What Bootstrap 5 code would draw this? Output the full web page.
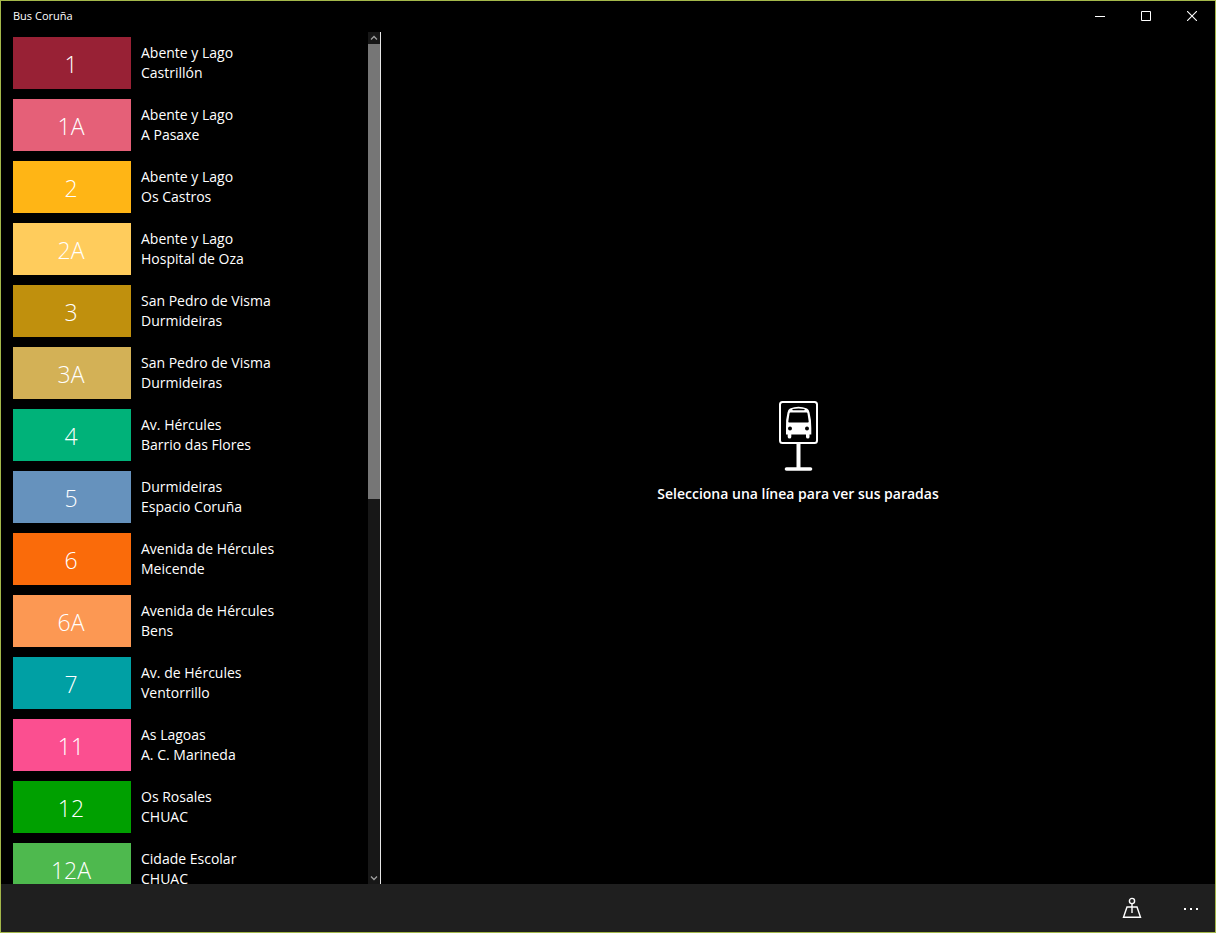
<!DOCTYPE html>
<html lang="es">
<head>
<meta charset="utf-8">
<meta name="viewport" content="width=device-width, initial-scale=1">
<title>Bus Coruña</title>
<link href="https://cdn.jsdelivr.net/npm/bootstrap@5.3.0/dist/css/bootstrap.min.css" rel="stylesheet">
<style>
  body { background: #000; color: #fff; font-family: "Open Sans", "Noto Sans", sans-serif; font-size: 14px; line-height: 20px; }
  .app-window { border: 1px solid #a4b84a; }
  .titlebar { height: 31px; padding: 0 0 2px 12px; font-size: 11px; }
  .caption-btn { width: 46px; color: #fff; }
  .plain-btn { background: none; border: 0; padding: 0; display: flex; align-items: center; justify-content: center; }
  .sidebar { width: 380px; border-right: 1px solid #e6e6e6; }
  .lines { padding: 5px 12px; gap: 10px; }
  .line-link { color: #fff; gap: 10px; }
  .line-no { width: 118px; height: 52px; padding: 1px 2px 0 0; font-size: 23px; font-weight: 350; line-height: 30px; }
  .scroller { width: 12px; background: #171717; }
  .scroller button { height: 12px; color: #a0a0a0; }
  .thumb { background: #767676; }
  .empty-state { gap: 12px; padding-bottom: 12px; font-weight: 600; }
  .commandbar { height: 48px; background: #1f1f1f; }
  .commandbar button { color: #fff; }
  .btn-map { width: 70px; }
  .btn-more { width: 48px; }
</style>
</head>
<body>
<div class="app-window vh-100 d-flex flex-column overflow-hidden">
  <header class="titlebar d-flex flex-shrink-0 align-items-center justify-content-between">
    <span>Bus Coruña</span>
    <div class="d-flex h-100">
      <button class="plain-btn caption-btn" type="button" aria-label="Minimizar"><svg width="10" height="10" viewBox="0 0 10 10" shape-rendering="crispEdges"><path d="M0 5h10v1H0z" fill="currentColor"/></svg></button>
      <button class="plain-btn caption-btn" type="button" aria-label="Maximizar"><svg width="10" height="10" viewBox="0 0 10 10"><path d="M.5.5h9v9h-9z" fill="none" stroke="currentColor"/></svg></button>
      <button class="plain-btn caption-btn" type="button" aria-label="Cerrar"><svg width="10" height="10" viewBox="0 0 10 10"><path d="M0 0l10 10M10 0L0 10" fill="none" stroke="currentColor" stroke-width="1.1"/></svg></button>
    </div>
  </header>

  <div class="d-flex flex-grow-1 overflow-hidden">
    <aside class="sidebar d-flex flex-shrink-0">
      <nav class="flex-grow-1 overflow-hidden" aria-label="Líneas">
        <ul class="lines list-unstyled d-flex flex-column mb-0" id="lines"></ul>
      </nav>
      <div class="scroller d-flex flex-column">
        <button class="plain-btn w-100" type="button" aria-label="Subir"><svg width="8" height="6" viewBox="0 0 8 6"><path d="M1 4.5l3-3 3 3" fill="none" stroke="currentColor" stroke-width="1.3"/></svg></button>
        <div class="flex-grow-1"><div class="thumb" style="height:55%"></div></div>
        <button class="plain-btn w-100" type="button" aria-label="Bajar"><svg width="8" height="6" viewBox="0 0 8 6"><path d="M1 1.5l3 3 3-3" fill="none" stroke="currentColor" stroke-width="1.3"/></svg></button>
      </div>
    </aside>

    <main class="empty-state flex-grow-1 d-flex flex-column align-items-center justify-content-center">
      <svg width="40" height="72" viewBox="0 0 40 72" aria-hidden="true">
        <rect x="2" y="2" width="37" height="41" rx="2.5" fill="none" stroke="#fff" stroke-width="2"/>
        <path d="M20.500 44v25" stroke="#fff" stroke-width="4"/>
        <path d="M8.500 69h24" stroke="#fff" stroke-width="3.600" stroke-linecap="round"/>
        <path fill="#fff" fill-rule="evenodd" d="M12 8.500Q20.500 5 29 8.500Q31 9.500 31.500 12.500Q33.500 20 33.300 28V34.500H31.500V37Q31.500 38.500 29.800 38.500T28 37V34.500H13.300V37Q13.300 38.500 11.600 38.500T9.700 37V34.500H8V28Q7.500 20 9.500 12.500Q10 9.500 12 8.500ZM14.500 9Q14 10.300 15 10.300H26Q27 10.300 26.500 9Q20.500 7.800 14.500 9ZM12.300 12.500Q11.700 12.500 11.500 13.500L10.300 21.500Q10.200 22.500 11.200 22.500H29.800Q30.800 22.500 30.700 21.500L29.500 13.500Q29.300 12.500 28.700 12.500Z"/>
        <circle cx="12" cy="28.500" r="2" fill="#000"/><circle cx="29" cy="28.500" r="2" fill="#000"/>
      </svg>
      <div>Selecciona una línea para ver sus paradas</div>
    </main>
  </div>

  <footer class="commandbar d-flex flex-shrink-0 justify-content-end">
    <button class="plain-btn btn-map" type="button" aria-label="Mapa"><svg width="20" height="22" viewBox="0 0 20 22" fill="none" stroke="currentColor" stroke-width="1.400"><circle cx="10" cy="4" r="2.600"/><path d="M10 6.600V16M7.500 10H5L1.500 20.300h17L15 10h-2.500M5 10h10"/></svg></button>
    <button class="plain-btn btn-more" type="button" aria-label="Más"><svg width="14" height="4" viewBox="0 0 14 4" fill="currentColor"><path d="M0 2h2v2H0zM6 2h2v2H6zM12 2h2v2h-2z"/></svg></button>
  </footer>
</div>
<script src="https://cdn.jsdelivr.net/npm/bootstrap@5.3.0/dist/js/bootstrap.bundle.min.js"></script>
<script>
  const lines = [
    ["1", "#982135", "Abente y Lago", "Castrillón"],
    ["1A", "#e56078", "Abente y Lago", "A Pasaxe"],
    ["2", "#ffb515", "Abente y Lago", "Os Castros"],
    ["2A", "#ffcc5c", "Abente y Lago", "Hospital de Oza"],
    ["3", "#c0900d", "San Pedro de Visma", "Durmideiras"],
    ["3A", "#d3b156", "San Pedro de Visma", "Durmideiras"],
    ["4", "#00b279", "Av. Hércules", "Barrio das Flores"],
    ["5", "#6692bd", "Durmideiras", "Espacio Coruña"],
    ["6", "#fa6b0a", "Avenida de Hércules", "Meicende"],
    ["6A", "#fc9853", "Avenida de Hércules", "Bens"],
    ["7", "#00a0a4", "Av. de Hércules", "Ventorrillo"],
    ["11", "#fb4f90", "As Lagoas", "A. C. Marineda"],
    ["12", "#00a000", "Os Rosales", "CHUAC"],
    ["12A", "#4eb94e", "Cidade Escolar", "CHUAC"]
  ];
  document.getElementById("lines").innerHTML = lines.map(([no, color, from, to]) =>
    `<li><a href="#" class="line-link d-flex align-items-center text-decoration-none">
      <span class="line-no d-flex flex-shrink-0 align-items-center justify-content-center" style="background:${color}">${no}</span>
      <span>${from}<br>${to}</span></a></li>`).join("");
</script>
</body>
</html>
